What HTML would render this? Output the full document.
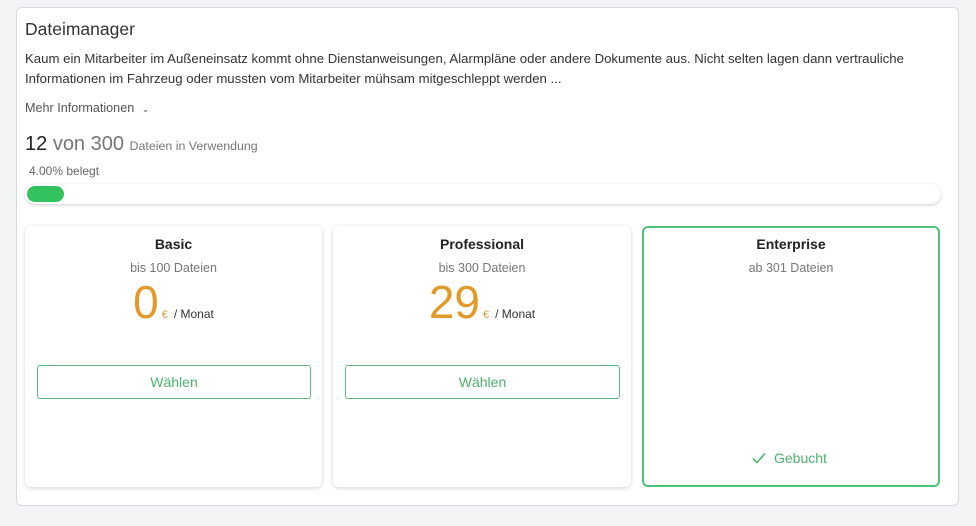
<!DOCTYPE html>
<html><head><meta charset="utf-8"><style>
*{box-sizing:border-box;margin:0;padding:0}
body{width:976px;height:526px;background:#f3f4f6;font-family:"Liberation Sans",sans-serif;position:relative;overflow:hidden;color:#333}
.outer{position:absolute;left:16px;top:7px;width:943px;height:499px;background:#fff;border:1px solid #d6d9de;border-radius:6px}
.abs{position:absolute;white-space:nowrap}
.card{position:absolute;top:226px;height:261px;background:#fff;border-radius:6px;box-shadow:0 1px 4px rgba(0,0,0,.18);text-align:center}
.card h3{position:absolute;top:10px;left:0;right:0;font-size:14px;font-weight:bold;color:#222}
.card .sub{position:absolute;top:35px;left:0;right:0;font-size:12.5px;color:#777}
.price{position:absolute;top:50px;left:0;right:0;font-size:12px;color:#333}
.price b{font-weight:normal;font-size:46px;color:#e09a2a;line-height:52px}
.price i{font-style:normal;color:#e09a2a;font-size:11px;margin:0 6px 0 3px}
.btn{position:absolute;top:139px;left:12px;right:11px;height:34px;border:1px solid #5fb87f;border-radius:3px;color:#4fb071;font-size:14px;line-height:32px}
</style></head><body>
<div class="outer"></div>
<div class="abs" style="left:25px;top:19px;font-size:17.5px;color:#333">Dateimanager</div>
<div class="abs" style="left:25px;top:49px;font-size:13.2px;line-height:20px;color:#333">Kaum ein Mitarbeiter im Außeneinsatz kommt ohne Dienstanweisungen, Alarmpläne oder andere Dokumente aus. Nicht selten lagen dann vertrauliche<br>Informationen im Fahrzeug oder mussten vom Mitarbeiter mühsam mitgeschleppt werden ...</div>
<div class="abs" style="left:25px;top:101px;font-size:12.6px;color:#555">Mehr Informationen <span style="font-size:9px;margin-left:4px">&#8964;</span></div>
<div class="abs" style="left:25px;top:133px;font-size:20px;color:#222">12 <span style="color:#777">von 300</span> <span style="font-size:12.4px;color:#777">Dateien in Verwendung</span></div>
<div class="abs" style="left:29px;top:164px;font-size:12px;color:#666">4.00% belegt</div>
<div class="abs" style="left:25px;top:184px;width:916px;height:20px;border-radius:10px;background:#fff;box-shadow:0 1px 3px rgba(0,0,0,.2)"></div>
<div class="abs" style="left:27px;top:186px;width:37px;height:16px;border-radius:8px;background:#34c25f"></div>

<div class="card" style="left:25px;width:297px"><h3>Basic</h3><div class="sub">bis 100 Dateien</div><div class="price"><b>0</b><i>€</i>/ Monat</div><div class="btn">Wählen</div></div>
<div class="card" style="left:333px;width:298px"><h3>Professional</h3><div class="sub">bis 300 Dateien</div><div class="price"><b>29</b><i>€</i>/ Monat</div><div class="btn">Wählen</div></div>
<div class="card" style="left:642px;width:298px;border:2px solid #4fc178;box-shadow:none"><h3 style="top:8px">Enterprise</h3><div class="sub" style="top:33px">ab 301 Dateien</div>
<div class="abs" style="left:108px;top:222px;font-size:14px;color:#4fb071"><svg width="14" height="12" viewBox="0 0 14 12" style="margin-right:8px;vertical-align:-1px"><path d="M1 6.5l4 4L13 1.5" fill="none" stroke="#4fb071" stroke-width="1.6"/></svg>Gebucht</div></div>
</body></html>
